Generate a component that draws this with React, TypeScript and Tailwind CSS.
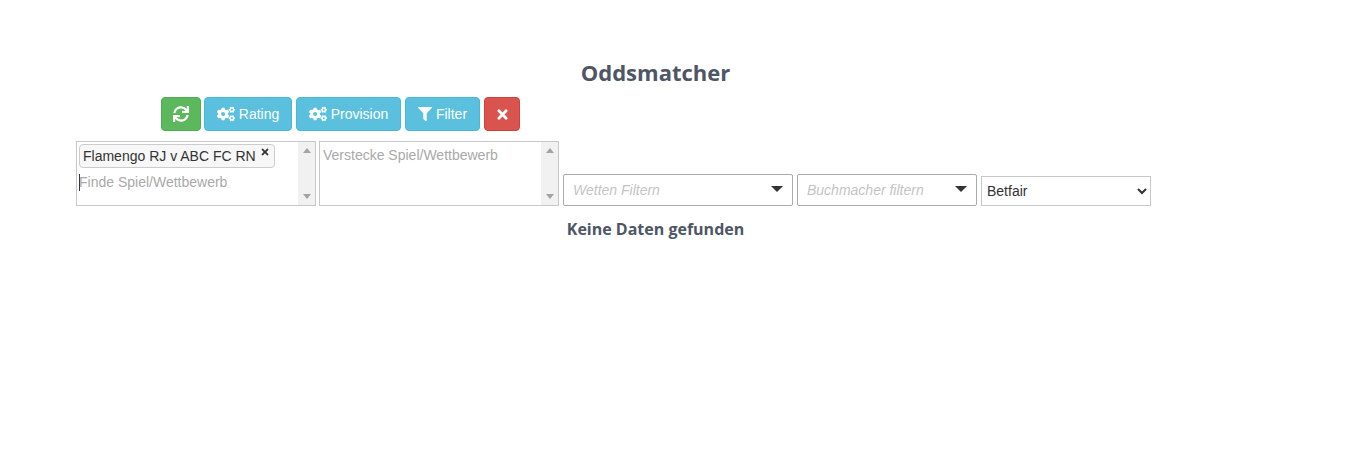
import { FaCogs, FaFilter, FaSync, FaTimes } from "react-icons/fa";

const ScrollTrack = () => (
  <div className="flex w-[17px] shrink-0 flex-col items-center justify-between bg-[#f1f1f1] py-[6px]">
    <span className="h-0 w-0 border-x-[4px] border-b-[5px] border-x-transparent border-b-[#a3a3a3]" />
    <span className="h-0 w-0 border-x-[4px] border-t-[5px] border-x-transparent border-t-[#a3a3a3]" />
  </div>
);

const ToolButton = ({ className, children }: { className: string; children: React.ReactNode }) => (
  <button className={`flex h-[34px] items-center justify-center gap-[4px] rounded-[4px] border text-[14px] text-white ${className}`}>
    {children}
  </button>
);

const Dropdown = ({ label, width }: { label: string; width: string }) => (
  <div className={`flex h-[32px] items-center justify-between rounded-[2px] border border-[#aaaaaa] bg-white px-[9px] ${width}`}>
    <span className="text-[14px] text-[#c4c4c4] italic">{label}</span>
    <span className="mb-[3px] h-0 w-0 border-x-[6px] border-t-[6px] border-x-transparent border-t-[#333333]" />
  </div>
);

export default function App() {
  return (
    <div className="min-h-[457px] w-[1345px] bg-white font-['Liberation_Sans',sans-serif] text-[#333333]">
      <div className="w-[1311px] pt-[57px]">
        <h2 className="text-center font-['Open_Sans',sans-serif] text-[22px] leading-[30px] font-bold text-[#4e5665]">
          Oddsmatcher
        </h2>

        <div className="mt-[10px] ml-[161px] flex gap-[3px]">
          <ToolButton className="w-[40px] border-[#4cae4c] bg-[#5cb85c] text-[16px]">
            <FaSync />
          </ToolButton>
          <ToolButton className="w-[88px] border-[#46b8da] bg-[#5bc0de]">
            <FaCogs className="text-[18px]" />
            Rating
          </ToolButton>
          <ToolButton className="ml-[1px] w-[105px] border-[#46b8da] bg-[#5bc0de]">
            <FaCogs className="text-[18px]" />
            Provision
          </ToolButton>
          <ToolButton className="ml-[1px] w-[75px] border-[#46b8da] bg-[#5bc0de]">
            <FaFilter className="text-[14px]" />
            Filter
          </ToolButton>
          <ToolButton className="ml-[1px] w-[36px] border-[#d43f3a] bg-[#d9534f]">
            <FaTimes className="text-[15px]" />
          </ToolButton>
        </div>

        <div className="mt-[10px] ml-[76px] flex items-end gap-[4px]">
          <div className="flex h-[65px] w-[240px] border border-[#c8c8c8] bg-white">
            <div className="min-w-0 flex-1 pt-[2px] pl-[2px]">
              <div className="flex h-[24px] w-[196px] items-center rounded-[4px] border border-[#cccccc] bg-[#f7f7f7] pl-[3px] text-[14px]">
                Flamengo RJ v ABC FC RN
                <FaTimes className="mb-[8px] ml-[4px] text-[10px]" />
              </div>
              <div className="mt-[3px] flex h-[22px] items-center text-[14px] text-[#a9a9a9]">
                <span className="-mr-[1px] h-[17px] w-px bg-[#333333]" />
                Finde Spiel/Wettbewerb
              </div>
            </div>
            <ScrollTrack />
          </div>

          <div className="-ml-[1px] flex h-[65px] w-[240px] border border-[#c8c8c8] bg-white">
            <div className="flex-1 pt-[3px] pl-[3px] text-[14px] text-[#a9a9a9]">Verstecke Spiel/Wettbewerb</div>
            <ScrollTrack />
          </div>

          <Dropdown label="Wetten Filtern" width="w-[230px]" />
          <Dropdown label="Buchmacher filtern" width="w-[180px]" />

          <select className="h-[30px] w-[170px] border border-[#c8c8c8] bg-white pl-[1px] text-[14px] text-[#333333]" defaultValue="Betfair">
            <option>Betfair</option>
          </select>
        </div>

        <h4 className="mt-[12px] text-center font-['Open_Sans',sans-serif] text-[16px] leading-[22px] font-bold text-[#4e5665]">
          Keine Daten gefunden
        </h4>
      </div>
    </div>
  );
}
